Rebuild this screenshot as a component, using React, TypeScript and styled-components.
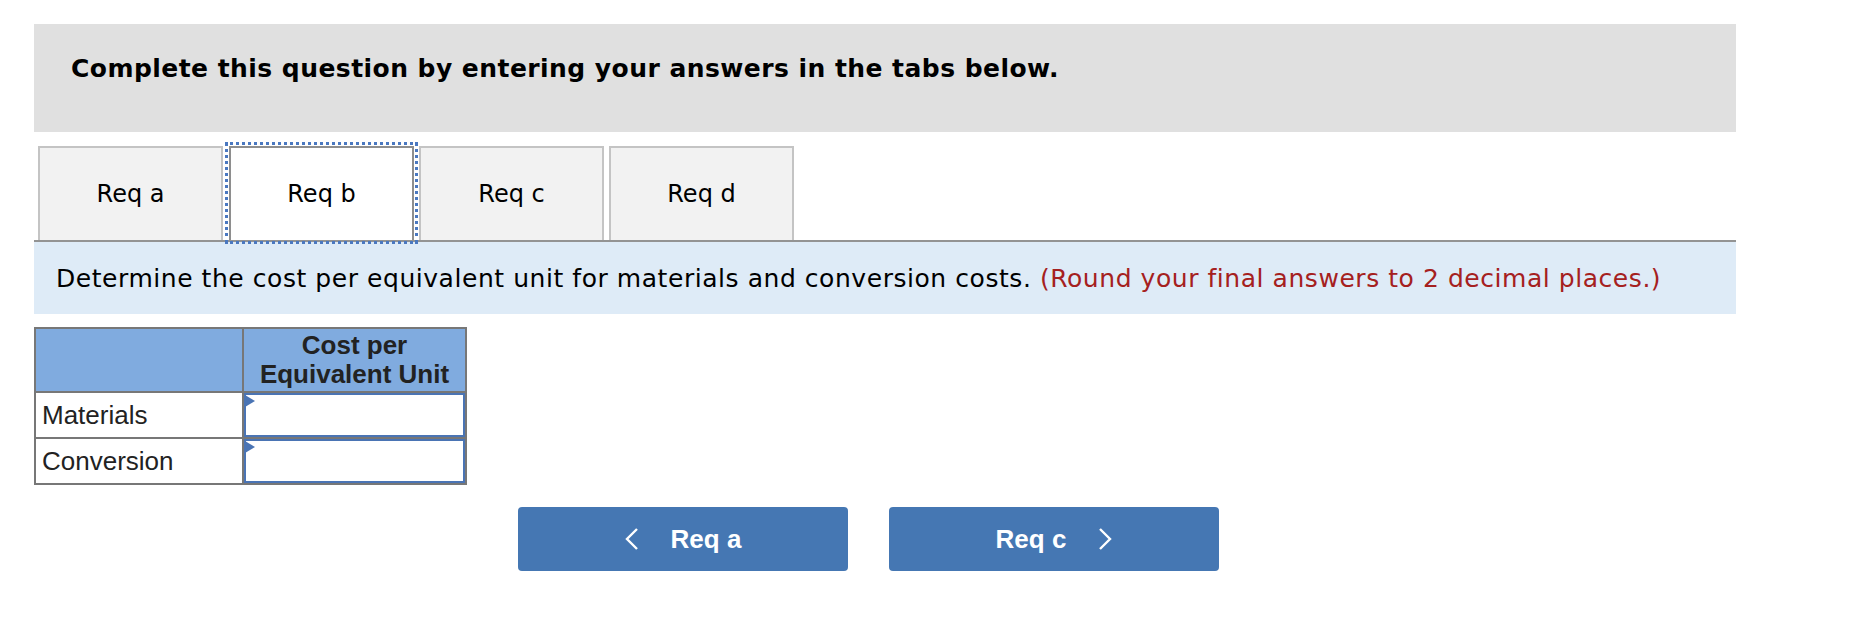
import * as React from 'react';
import styled, { createGlobalStyle } from 'styled-components';

const GlobalStyle = createGlobalStyle`
  html, body {
    margin: 0;
    padding: 0;
    background: #ffffff;
  }
`;

const Page = styled.div`
  width: 1702px;
  padding: 24px 0 0 34px;
  font-family: 'DejaVu Sans', Verdana, sans-serif;
  color: #000;
`;

const Banner = styled.div`
  height: 108px;
  background: #e0e0e0;
  padding: 0 0 0 37px;
  box-sizing: border-box;
  display: flex;
  align-items: flex-start;
`;

const BannerText = styled.h1`
  margin: 30px 0 0;
  font-size: 25px;
  letter-spacing: 0.45px;
  line-height: 30px;
  font-weight: bold;
`;

const TabRow = styled.div`
  margin-top: 14px;
  display: flex;
  gap: 5px;
  padding-left: 4px;
  border-bottom: 2px solid #939393;
`;

const Tab = styled.button<{ $active?: boolean }>`
  width: 185px;
  height: 94px;
  box-sizing: border-box;
  border: 2px solid ${p => (p.$active ? '#8e8e8e' : '#c4c4c4')};
  border-bottom: none;
  background: ${p => (p.$active ? '#ffffff' : '#f2f2f2')};
  font-family: 'DejaVu Sans', Verdana, sans-serif;
  font-size: 24px;
  color: #000;
  padding: 0;
  margin-left: ${p => (p.$active ? '1px' : '0')};
  outline: ${p => (p.$active ? '3px dotted #4a78c0' : 'none')};
  outline-offset: 1px;
  cursor: pointer;
`;

const Instruction = styled.div`
  height: 72px;
  background: #deebf7;
  padding-left: 22px;
  display: flex;
  align-items: center;
  font-size: 25px;
  letter-spacing: 0.55px;
`;

const Hint = styled.span`
  color: #a52020;
`;

const Table = styled.table`
  margin-top: 13px;
  border-collapse: collapse;
  border: 2px solid #777777;
  font-family: 'Liberation Sans', Arial, sans-serif;
  font-size: 26px;
  color: #222;
`;

const HeadCell = styled.th<{ $w: number }>`
  width: ${p => p.$w}px;
  height: 62px;
  background: #80abdf;
  border: 2px solid #777777;
  font-weight: bold;
  line-height: 29px;
  padding: 0;
  text-align: center;
`;

const LabelCell = styled.td`
  height: 44px;
  border: 2px solid #777777;
  padding: 0 0 0 6px;
  text-align: left;
`;

const InputCell = styled.td`
  border: 2px solid #777777;
  padding: 0;
`;

const InputWrap = styled.div`
  position: relative;
  height: 44px;
`;

const Field = styled.input`
  width: 100%;
  height: 100%;
  box-sizing: border-box;
  border: 2px solid #4a74b4;
  margin: 0;
  outline: none;
  font-size: 22px;
`;

const Marker = styled.span`
  position: absolute;
  left: 1px;
  top: 2px;
  width: 0;
  height: 0;
  border-top: 6px solid transparent;
  border-bottom: 6px solid transparent;
  border-left: 10px solid #4a74b4;
`;

const NavRow = styled.div`
  margin-top: 22px;
  padding-left: 484px;
  display: flex;
  gap: 41px;
`;

const NavButton = styled.button`
  width: 330px;
  height: 64px;
  border: none;
  border-radius: 4px;
  background: #4577b3;
  color: #fff;
  font-family: 'Liberation Sans', Arial, sans-serif;
  font-weight: bold;
  font-size: 26px;
  display: flex;
  align-items: center;
  justify-content: center;
  gap: 32px;
  cursor: pointer;
`;

const Chevron = ({ dir }: { dir: 'left' | 'right' }) => (
  <svg width="14" height="24" viewBox="0 0 14 24">
    <polyline
      points={dir === 'left' ? '12,2 2,12 12,22' : '2,2 12,12 2,22'}
      fill="none"
      stroke="#fff"
      strokeWidth="2.4"
    />
  </svg>
);

const TABS = ['Req a', 'Req b', 'Req c', 'Req d'];
const ROWS = ['Materials', 'Conversion'];

export default function App() {
  return (
    <>
      <GlobalStyle />
      <Page>
        <Banner>
          <BannerText>Complete this question by entering your answers in the tabs below.</BannerText>
        </Banner>
        <TabRow>
          {TABS.map(t => (
            <Tab key={t} $active={t === 'Req b'}>
              {t}
            </Tab>
          ))}
        </TabRow>
        <Instruction>
          <span>
            Determine the cost per equivalent unit for materials and conversion costs.{' '}
            <Hint>(Round your final answers to 2 decimal places.)</Hint>
          </span>
        </Instruction>
        <Table>
          <thead>
            <tr>
              <HeadCell $w={206} />
              <HeadCell $w={221}>
                Cost per
                <br />
                Equivalent Unit
              </HeadCell>
            </tr>
          </thead>
          <tbody>
            {ROWS.map(r => (
              <tr key={r}>
                <LabelCell>{r}</LabelCell>
                <InputCell>
                  <InputWrap>
                    <Field type="text" />
                    <Marker />
                  </InputWrap>
                </InputCell>
              </tr>
            ))}
          </tbody>
        </Table>
        <NavRow>
          <NavButton>
            <Chevron dir="left" />
            <span>Req a</span>
          </NavButton>
          <NavButton>
            <span>Req c</span>
            <Chevron dir="right" />
          </NavButton>
        </NavRow>
      </Page>
    </>
  );
}
